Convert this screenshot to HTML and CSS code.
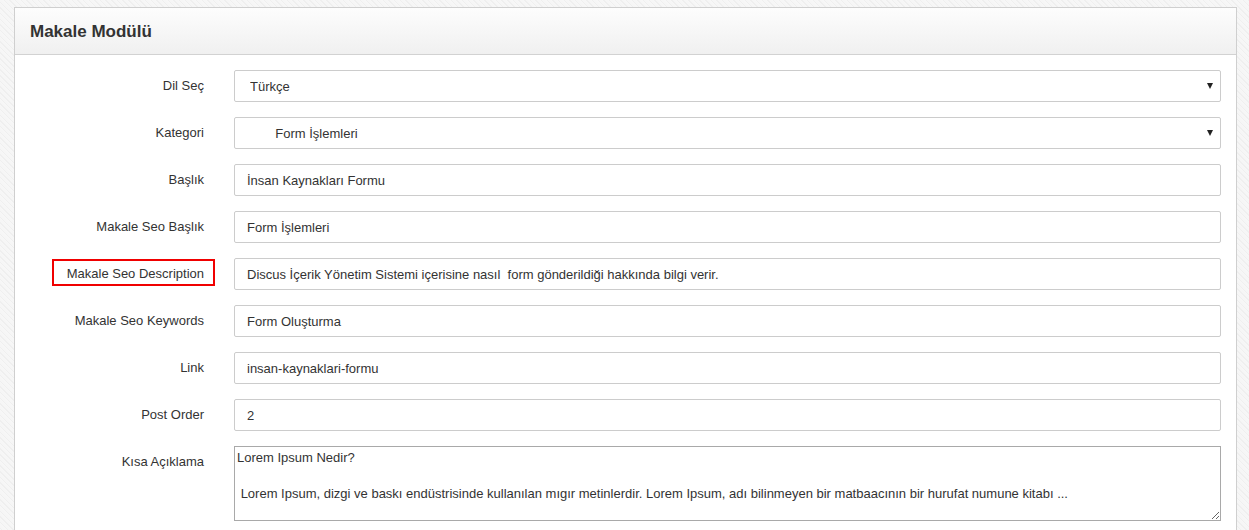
FILE: index.html
```html
<!DOCTYPE html>
<html lang="tr">
<head>
    <meta charset="UTF-8">
    <meta name="viewport" content="width=device-width, initial-scale=1.0">
    <title>Makale Modülü</title>
    <link rel="stylesheet" href="styles.css">
</head>
<body>
    <div class="panel">
        <div class="panel-heading">
            <h3>Makale Modülü</h3>
        </div>
        <form class="panel-body">
            <div class="form-row">
                <label>Dil Seç</label>
                <div class="select-wrap">
                    <select class="field">
                        <option>Türkçe</option>
                        <option>English</option>
                    </select>
                </div>
            </div>
            <div class="form-row">
                <label>Kategori</label>
                <div class="select-wrap">
                    <select class="field">
                        <option>&nbsp;&nbsp;&nbsp;&nbsp;&nbsp;&nbsp;&nbsp;Form İşlemleri</option>
                    </select>
                </div>
            </div>
            <div class="form-row">
                <label>Başlık</label>
                <input class="field" type="text" value="İnsan Kaynakları Formu">
            </div>
            <div class="form-row">
                <label>Makale Seo Başlık</label>
                <input class="field" type="text" value="Form İşlemleri">
            </div>
            <div class="form-row">
                <label><span class="marked">Makale Seo Description</span></label>
                <input class="field" type="text" value="Discus İçerik Yönetim Sistemi içerisine nasıl  form gönderildiği hakkında bilgi verir.">
            </div>
            <div class="form-row">
                <label>Makale Seo Keywords</label>
                <input class="field" type="text" value="Form Oluşturma">
            </div>
            <div class="form-row">
                <label>Link</label>
                <input class="field" type="text" value="insan-kaynaklari-formu">
            </div>
            <div class="form-row">
                <label>Post Order</label>
                <input class="field" type="text" value="2">
            </div>
            <div class="form-row">
                <label>Kısa Açıklama</label>
                <textarea class="area">Lorem Ipsum Nedir?

 Lorem Ipsum, dizgi ve baskı endüstrisinde kullanılan mıgır metinlerdir. Lorem Ipsum, adı bilinmeyen bir matbaacının bir hurufat numune kitabı ...</textarea>
            </div>
        </form>
    </div>
</body>
</html>
```

FILE: styles.css
```css
html, body {
    height: 100%;
}

body {
    margin: 0;
    padding: 7px 12px 0 14px;
    font-family: "Liberation Sans", Arial, sans-serif;
    font-size: 13px;
    color: #333;
    background-color: #f4f4f4;
    background-image: repeating-linear-gradient(45deg, #f7f7f7 0, #f7f7f7 1px, #efefef 1px, #efefef 2px, #f6f6f6 2px, #f6f6f6 4px);
    overflow: hidden;
}

.panel {
    background: #fff;
    border: 1px solid #cfcfcf;
    border-bottom: none;
    min-height: 600px;
}

.panel-heading {
    height: 46px;
    display: flex;
    align-items: center;
    padding: 0 15px;
    background: linear-gradient(to bottom, #fdfdfd, #f0f0f0);
    border-bottom: 1px solid #d2d2d2;
}

.panel-heading h3 {
    margin: 0;
    font-size: 17px;
    font-weight: bold;
    color: #333;
    padding-top: 2px;
}

.panel-body {
    padding: 15px 15px 0 0;
    display: flex;
    flex-direction: column;
    gap: 15px;
}

.form-row {
    display: grid;
    grid-template-columns: 189px 1fr;
    column-gap: 30px;
    align-items: start;
}

.form-row label {
    text-align: right;
    padding-top: 7px;
    line-height: 18px;
}

.marked {
    position: relative;
}

.marked::after {
    content: "";
    position: absolute;
    left: -15px;
    right: -11px;
    top: -7px;
    bottom: -5px;
    border: 2px solid #f00000;
}

.field {
    box-sizing: border-box;
    width: 100%;
    height: 32px;
    border: 1px solid #cccccc;
    border-radius: 2px;
    padding: 0 12px;
    font-family: inherit;
    font-size: 13px;
    color: #333;
    background: #fff;
    outline: none;
}

.select-wrap {
    position: relative;
}

.select-wrap select {
    -webkit-appearance: none;
    appearance: none;
    padding-left: 15px;
}

.select-wrap::after {
    content: "";
    position: absolute;
    right: 8px;
    top: 13px;
    border-left: 3.5px solid transparent;
    border-right: 3.5px solid transparent;
    border-top: 6px solid #222;
    pointer-events: none;
}

.area {
    box-sizing: border-box;
    width: 100%;
    height: 75px;
    border: 1px solid #a9a9a9;
    padding: 2px;
    font-family: inherit;
    font-size: 13px;
    line-height: 18px;
    color: #333;
    outline: none;
}
```
